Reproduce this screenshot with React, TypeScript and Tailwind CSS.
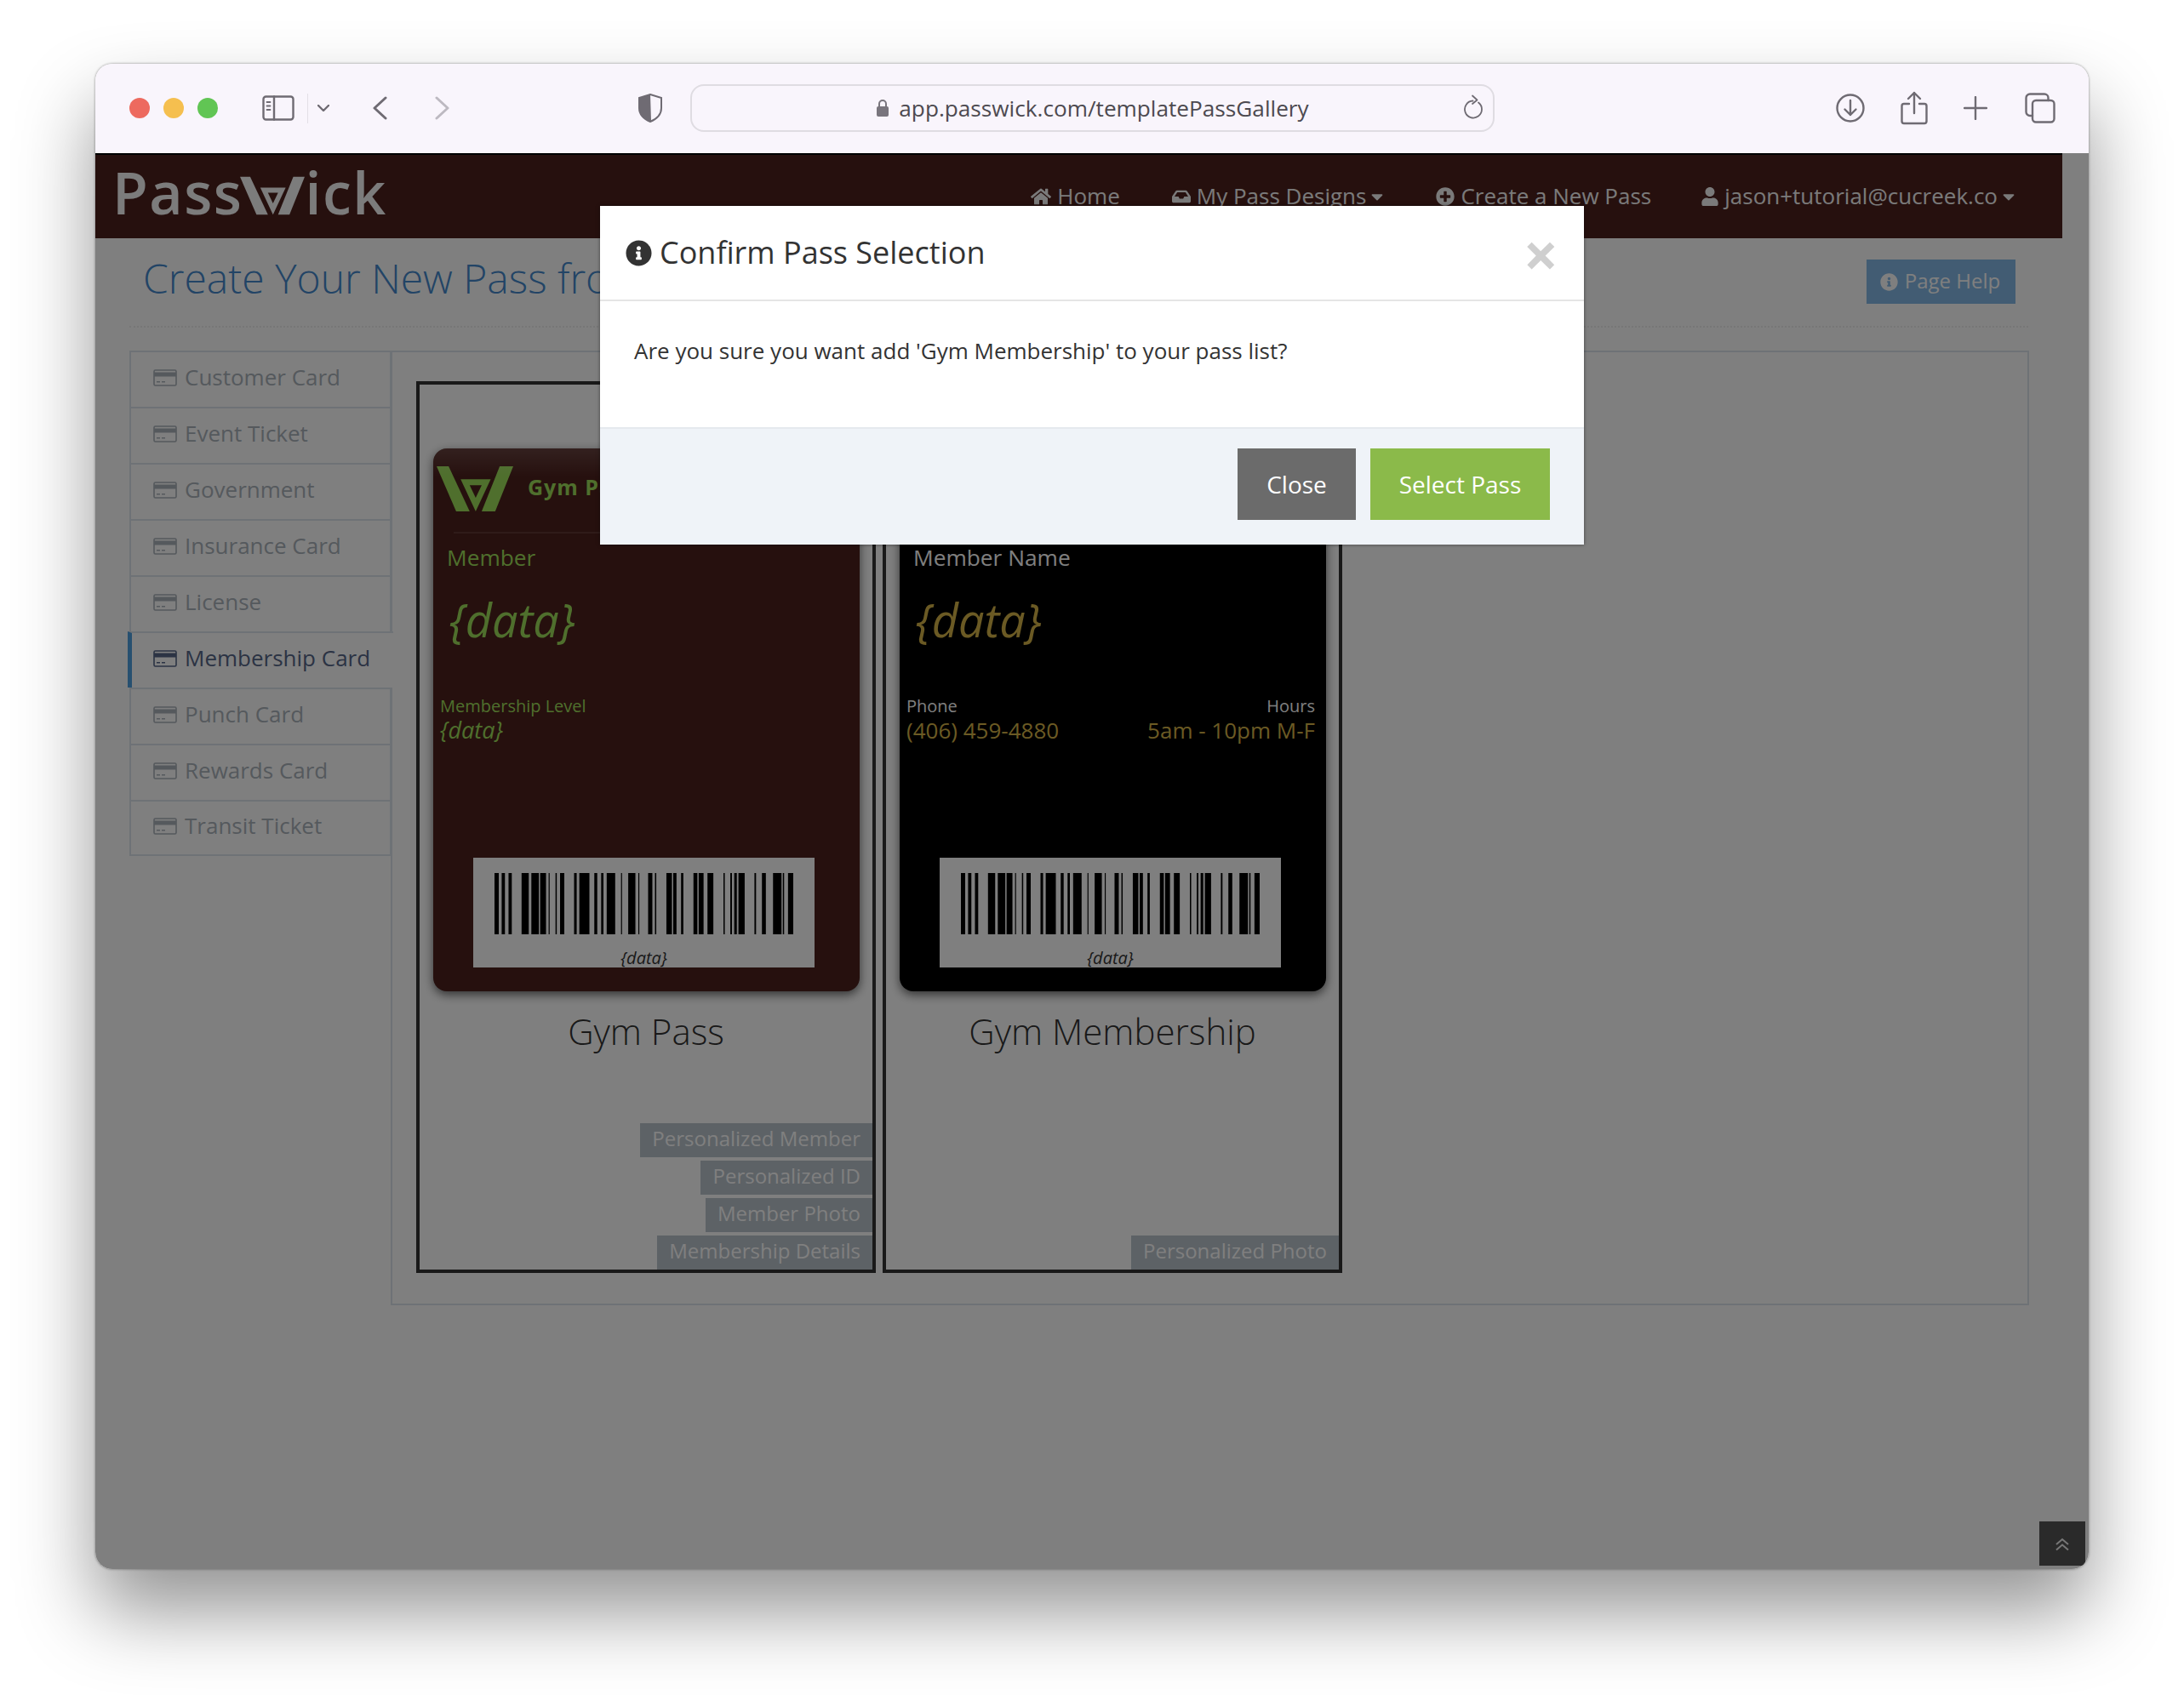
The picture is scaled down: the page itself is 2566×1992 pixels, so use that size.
import React from 'react';
import { FaHome, FaInbox, FaPlusCircle, FaUser, FaCaretDown, FaInfoCircle } from 'react-icons/fa';

const BARS: [number, number][] = [[262,275],[284,294],[305,315],[345,367],[375,398],[402,420],[428,431],[449,453],[463,476],[506,514],[522,553],[568,577],[589,596],[606,632],[650,653],[672,694],[703,706],[733,746],[754,758],[789,806],[810,820],[834,841],[872,884],[888,903],[915,933],[964,968],[985,990],[997,1005],[1010,1029],[1059,1064],[1082,1094],[1116,1142],[1146,1150],[1162,1178]];

function CardIcon() {
  return (
    <svg viewBox="0 0 28 20" className="w-[28px] h-[20px] shrink-0" fill="none">
      <rect x="1" y="1" width="26" height="18" rx="1.5" stroke="currentColor" strokeWidth="1.6" />
      <rect x="1" y="3.5" width="26" height="5" fill="currentColor" />
      <rect x="4" y="14" width="4" height="1.5" fill="currentColor" />
      <rect x="10" y="14" width="4" height="1.5" fill="currentColor" />
    </svg>
  );
}

function WMark({ className, hole }: { className: string; hole: string }) {
  return (
    <svg viewBox="0 0 255 150" className={className}>
      <polygon points="0,0 40,0 110,150 65,150" fill="currentColor" />
      <polygon points="210,0 255,0 195,150 150,150" fill="currentColor" />
      <polygon points="80,43 180,43 130,150" fill="currentColor" />
      <polygon points="110,63 150,63 130,105" fill={hole} />
    </svg>
  );
}

function Barcode() {
  return (
    <div className="w-[401px] h-[129px] bg-white ml-[47px] mt-auto mb-[28px] flex flex-col items-center shrink-0 overflow-hidden">
      <svg viewBox="262 0 916 100" preserveAspectRatio="none" className="w-[351px] h-[72px] mt-[18px] shrink-0">
        {BARS.map(([a, b]) => (
          <rect key={a} x={a} y={0} width={b - a} height={100} fill="#000" />
        ))}
      </svg>
      <div className="text-[20px] leading-[22px] italic text-[#333] mt-[17px] whitespace-nowrap">{'{data}'}</div>
    </div>
  );
}

type PassProps = {
  bg: string;
  title: string;
  head: string;
  first: React.ReactNode;
  row: React.ReactNode;
  tags: string[];
};

function PassColumn({ bg, title, head, first, row, tags }: PassProps) {
  return (
    <div className="w-[540px] h-[1048px] border-4 border-[#333] flex flex-col shrink-0">
      <div className={`${bg} w-[501px] h-[638px] ml-[16px] mt-[75px] rounded-[16px] shadow-[0_4px_12px_rgba(0,0,0,0.6)] flex flex-col shrink-0 relative overflow-hidden`}>
        <div className="h-[34px] bg-gradient-to-b from-white/15 to-transparent absolute top-0 left-0 right-0" />
        <div className="flex items-start pl-[4px] pt-[18px] h-[98px] shrink-0">
          {head === 'Gym Pass' ? (
            <WMark className="w-[90px] h-[59px] text-[#9ede5a]" hole="#4c201c" />
          ) : (
            <WMark className="w-[90px] h-[59px] text-[#d6b448]" hole="#000" />
          )}
          <span className={`ml-[17px] mt-[12px] text-[25px] leading-[30px] font-bold tracking-[1px] whitespace-nowrap ${head === 'Gym Pass' ? 'text-[#9ede5a]' : 'text-[#d6b448]'}`}>{head}</span>
        </div>
        <div className="h-[2px] mx-[24px] bg-white/10 shrink-0" />
        {first}
        {row}
        <Barcode />
      </div>
      <div className="text-center text-[42px] leading-[58px] font-light text-[#333] mt-[18px]">{title}</div>
      <div className="mt-auto flex flex-col items-end gap-[4px]">
        {tags.map((t) => (
          <div key={t} className="h-[40px] px-[14px] bg-[#bac4cc] text-white text-[24px] leading-[36px]">{t}</div>
        ))}
      </div>
    </div>
  );
}

const NAV_ITEMS = ['Customer Card', 'Event Ticket', 'Government', 'Insurance Card', 'License', 'Membership Card', 'Punch Card', 'Rewards Card', 'Transit Ticket'];

function NavLink({ icon, children, caret, cls }: { icon: React.ReactNode; children: React.ReactNode; caret?: boolean; cls: string }) {
  return (
    <div className={`flex items-center ${cls}`}>
      {icon}
      <span className="ml-[7px]">{children}</span>
      {caret && <FaCaretDown className="w-[22px] h-[22px] ml-[2px]" />}
    </div>
  );
}

const stroke = { fill: 'none', stroke: '#6f6b73', strokeWidth: 2.4, strokeLinecap: 'round' as const, strokeLinejoin: 'round' as const };

function Toolbar() {
  return (
    <div className="h-[105px] bg-[#f9f5fc] flex items-center relative shrink-0 pb-[1px]">
      <div className="w-[24px] h-[24px] rounded-full bg-[#ed6a5f] ml-[40px] -mt-[1px]" />
      <div className="w-[24px] h-[24px] rounded-full bg-[#f5bf4f] ml-[16px] -mt-[1px]" />
      <div className="w-[24px] h-[24px] rounded-full bg-[#61c554] ml-[16px] -mt-[1px]" />
      <svg viewBox="0 0 38 30" className="w-[38px] h-[30px] ml-[52px]" {...stroke}>
        <rect x="1.5" y="1.5" width="35" height="27" rx="3" />
        <path d="M14 1.5V28.5" />
        <path d="M5.5 8h4M5.5 12.5h4M5.5 17h4" strokeWidth="1.8" />
      </svg>
      <div className="w-[1px] h-[35px] bg-[#e3dfe6] ml-[15px]" />
      <svg viewBox="0 0 14 8" className="w-[14px] h-[8px] ml-[11px]" {...stroke}>
        <path d="M1 1l6 6 6-6" />
      </svg>
      <svg viewBox="0 0 17 28" className="w-[17px] h-[28px] ml-[51px]" {...stroke} strokeWidth={3}>
        <path d="M15 2L2 14l13 12" />
      </svg>
      <svg viewBox="0 0 17 28" className="w-[17px] h-[28px] ml-[56px]" {...stroke} stroke="#bdb9c1" strokeWidth={3}>
        <path d="M2 2l13 12L2 26" />
      </svg>
      <svg viewBox="0 0 28 34" className="w-[28px] h-[34px] ml-[222px]">
        <path d="M14 1L27 5v12c0 8-6 13-13 16C7 30 1 25 1 17V5z" fill="none" stroke="#6f6b73" strokeWidth="2" />
        <path d="M14 1L1 5v12c0 8 6 13 14 16z" fill="#6f6b73" />
      </svg>
      <div className="w-[945px] h-[56px] ml-[33px] rounded-[16px] border-2 border-[#dfdce2] flex items-center justify-center relative text-[26.2px] text-[#4d4a50]">
        <svg viewBox="0 0 16 22" className="w-[16px] h-[22px] mr-[11px]">
          <rect x="1" y="9" width="14" height="12" rx="2" fill="#79757d" />
          <path d="M4 9V6a4 4 0 018 0v3" fill="none" stroke="#79757d" strokeWidth="2" />
        </svg>
        <span className="mt-[2px]">app.passwick.com/templatePassGallery</span>
        <svg viewBox="0 0 24 30" className="w-[24px] h-[30px] absolute right-[10px] top-[10px]" fill="none" stroke="#6f6b73" strokeWidth="1.8" strokeLinecap="round" strokeLinejoin="round">
          <path d="M10.500 7.500A10 10 0 1 0 17 9.500" />
          <path d="M10 1.500l5.500 5-5.500 4.500" />
        </svg>
      </div>
      <svg viewBox="0 0 34 36" className="w-[34px] h-[36px] ml-[401px]" {...stroke}>
        <circle cx="17" cy="18" r="15.5" />
        <path d="M17 9v17M10.500 19.500L17 26l6.500-6.500" />
      </svg>
      <svg viewBox="0 0 32 40" className="w-[32px] h-[40px] ml-[42px]" {...stroke}>
        <path d="M10 15H4a2.500 2.500 0 00-2.500 2.500v18A2.500 2.500 0 004 38h24a2.500 2.500 0 002.500-2.500v-18A2.500 2.500 0 0028 15h-6" />
        <path d="M16 26V2M9 9l7-7 7 7" />
      </svg>
      <svg viewBox="0 0 28 28" className="w-[28px] h-[28px] ml-[42px]" {...stroke}>
        <path d="M14 1v26M1 14h26" />
      </svg>
      <svg viewBox="0 0 36 36" className="w-[36px] h-[36px] ml-[44px]" {...stroke}>
        <rect x="9" y="9" width="25.500" height="25.500" rx="4" />
        <path d="M9 27H6a4.500 4.500 0 01-4.500-4.500V6A4.500 4.500 0 016 1.500h17A4.500 4.500 0 0127.500 6v3" />
      </svg>
    </div>
  );
}

function Modal() {
  return (
    <div className="absolute left-[593px] top-[62px] w-[1156px] h-[398px] bg-white flex flex-col shadow-[0_0_4px_rgba(0,0,0,0.5)] text-[#333]">
      <div className="h-[112px] border-b-2 border-[#e5e5e5] flex items-center pl-[30px] pr-[30px] shrink-0">
        <FaInfoCircle className="w-[31px] h-[31px] text-[#333]" />
        <span className="text-[36px] ml-[9px] -mt-[1px]">Confirm Pass Selection</span>
        <span className="ml-auto text-[72px] leading-none font-bold text-[#cfcfcf] mt-[2px]">×</span>
      </div>
      <div className="h-[148px] pl-[40px] pt-[38px] text-[26px] leading-[40px] shrink-0">
        Are you sure you want add 'Gym Membership' to your pass list?
      </div>
      <div className="flex-1 bg-[#eff3f8] border-t-2 border-[#e5e9ee] flex justify-end items-start pt-[24px] pr-[40px] gap-[17px]">
        <div className="w-[139px] h-[84px] bg-[#6b6b6b] text-white text-[28px] flex items-center justify-center -mt-px">Close</div>
        <div className="w-[211px] h-[84px] bg-[#8bba4a] text-white text-[28px] flex items-center justify-center -mt-px">Select Pass</div>
      </div>
    </div>
  );
}

export default function App() {
  return (
    <div className="w-[2566px] h-[1992px] bg-white pt-[75px] pl-[112px] font-['Open_Sans',sans-serif] overflow-hidden">
      <div className="w-[2342px] h-[1769px] rounded-[20px] shadow-[0_50px_90px_rgba(0,0,0,0.42),0_0_3px_rgba(0,0,0,0.45)]">
        <div className="w-full h-full rounded-[20px] overflow-hidden flex flex-col">
          <Toolbar />
          <div className="relative flex-1 bg-white">
            <div className="w-[2311px] h-full flex flex-col">
              <div className="h-[100px] bg-[#4c201c] border-t-2 border-black flex items-center text-[#f5f5f5] shrink-0">
                <div className="flex items-center ml-[20px] text-[#f8f8f8] text-[68px] font-semibold leading-none tracking-[1.5px] -mt-[11px]">
                  <span>Pass</span>
                  <WMark className="w-[76px] h-[48px] text-[#f8f8f8] -ml-[3px] mt-[8px]" hole="#4c201c" />
                  <span>ick</span>
                </div>
                <div className="flex items-center ml-auto mr-[52px] text-[26px] -mt-[1px]">
                  <NavLink cls="" icon={<FaHome className="w-[24px] h-[24px]" />}>Home</NavLink>
                  <NavLink cls="ml-[61px]" caret icon={<FaInbox className="w-[22px] h-[22px]" />}>My Pass Designs</NavLink>
                  <NavLink cls="ml-[58px]" icon={<FaPlusCircle className="w-[22px] h-[22px]" />}>Create a New Pass</NavLink>
                  <NavLink cls="ml-[59px]" caret icon={<FaUser className="w-[20px] h-[22px]" />}>jason+tutorial@cucreek.co</NavLink>
                </div>
              </div>
              <div className="h-[105px] mx-[40px] border-b-2 border-dotted border-[#eee] flex items-start justify-between pl-[16px] pr-[15px] shrink-0">
                <h1 className="text-[48px] leading-[66px] font-light text-[#4488cc] mt-[14px]">Create Your New Pass from a Template</h1>
                <div className="w-[175px] h-[52px] bg-[#84b8e6] text-white text-[24px] flex items-center justify-center mt-[25px]">
                  <FaInfoCircle className="w-[21px] h-[21px] mr-[8px] -ml-[2px]" /><span className="-mt-[2px]">Page Help</span>
                </div>
              </div>
              <div className="flex ml-[40px] mr-[39px] mt-[27px] items-start">
                <div className="w-[308px] shrink-0 flex flex-col relative">
                  {NAV_ITEMS.map((n, i) => {
                    const active = n === 'Membership Card';
                    return (
                      <div
                        key={n}
                        className={active
                          ? 'h-[66px] -ml-[2px] w-[312px] border-l-[5px] border-l-[#4ea0e0] border-t-2 border-t-[#dde5ec] bg-white flex items-center pl-[25px] pb-[5px] gap-[9px] text-[#566688] text-[26px]'
                          : `h-[66px] border-x-2 border-t-2 ${i === NAV_ITEMS.length - 1 ? 'border-b-2' : ''} border-[#dde5ec] bg-white flex items-center pl-[26px] pb-[5px] gap-[9px] text-[#aab2ba] text-[26px]`}
                      >
                        <CardIcon />
                        <span>{n}</span>
                      </div>
                    );
                  })}
                </div>
                <div className="flex-1 h-[1122px] border-2 border-[#dde5ec] -ml-[1px] pl-[28px] pt-[34px] flex gap-[8px]">
                  <PassColumn
                    bg="bg-[#4c201c]"
                    title="Gym Pass"
                    head="Gym Pass"
                    tags={['Personalized Member', 'Personalized ID', 'Member Photo', 'Membership Details']}
                    first={
                      <>
                        <div className="ml-[16px] mt-[8px] text-[26.3px] leading-[40px] text-[#9ede5a]">Member</div>
                        <div className="ml-[19px] mt-[18px] text-[54px] leading-[70px] italic text-[#9ede5a]">{'{data}'}</div>
                      </>
                    }
                    row={
                      <div className="mt-[54px] ml-[8px]">
                        <div className="text-[20px] leading-[26px] text-[#9ede5a]">Membership Level</div>
                        <div className="text-[27px] leading-[32px] italic text-[#9ede5a] -mt-px">{'{data}'}</div>
                      </div>
                    }
                  />
                  <PassColumn
                    bg="bg-black"
                    title="Gym Membership"
                    head="Gym Membership"
                    tags={['Personalized Photo']}
                    first={
                      <>
                        <div className="ml-[16px] mt-[8px] text-[26.3px] leading-[40px] text-white">Member Name</div>
                        <div className="ml-[19px] mt-[18px] text-[54px] leading-[70px] italic text-[#d6b448]">{'{data}'}</div>
                      </>
                    }
                    row={
                      <div className="mt-[54px] ml-[8px] mr-[13px] flex justify-between">
                        <div>
                          <div className="text-[20px] leading-[26px] text-white">Phone</div>
                          <div className="text-[26px] leading-[32px] text-[#d6b448] -mt-px">(406) 459-4880</div>
                        </div>
                        <div className="text-right">
                          <div className="text-[20px] leading-[26px] text-white">Hours</div>
                          <div className="text-[26px] leading-[32px] text-[#d6b448] -mt-px">5am - 10pm M-F</div>
                        </div>
                      </div>
                    }
                  />
                </div>
              </div>
            </div>
            <div className="absolute left-[2284px] top-[1608px] w-[54px] h-[52px] bg-[#555] flex items-center justify-center">
              <svg viewBox="0 0 16 16" className="w-[16px] h-[16px] mt-[2px]" fill="none" stroke="#eee" strokeWidth="2">
                <path d="M1 8l7-6 7 6M1 14.500l7-6 7 6" />
              </svg>
            </div>
            <div className="absolute inset-0 bg-black/50" />
            <Modal />
          </div>
        </div>
      </div>
    </div>
  );
}
